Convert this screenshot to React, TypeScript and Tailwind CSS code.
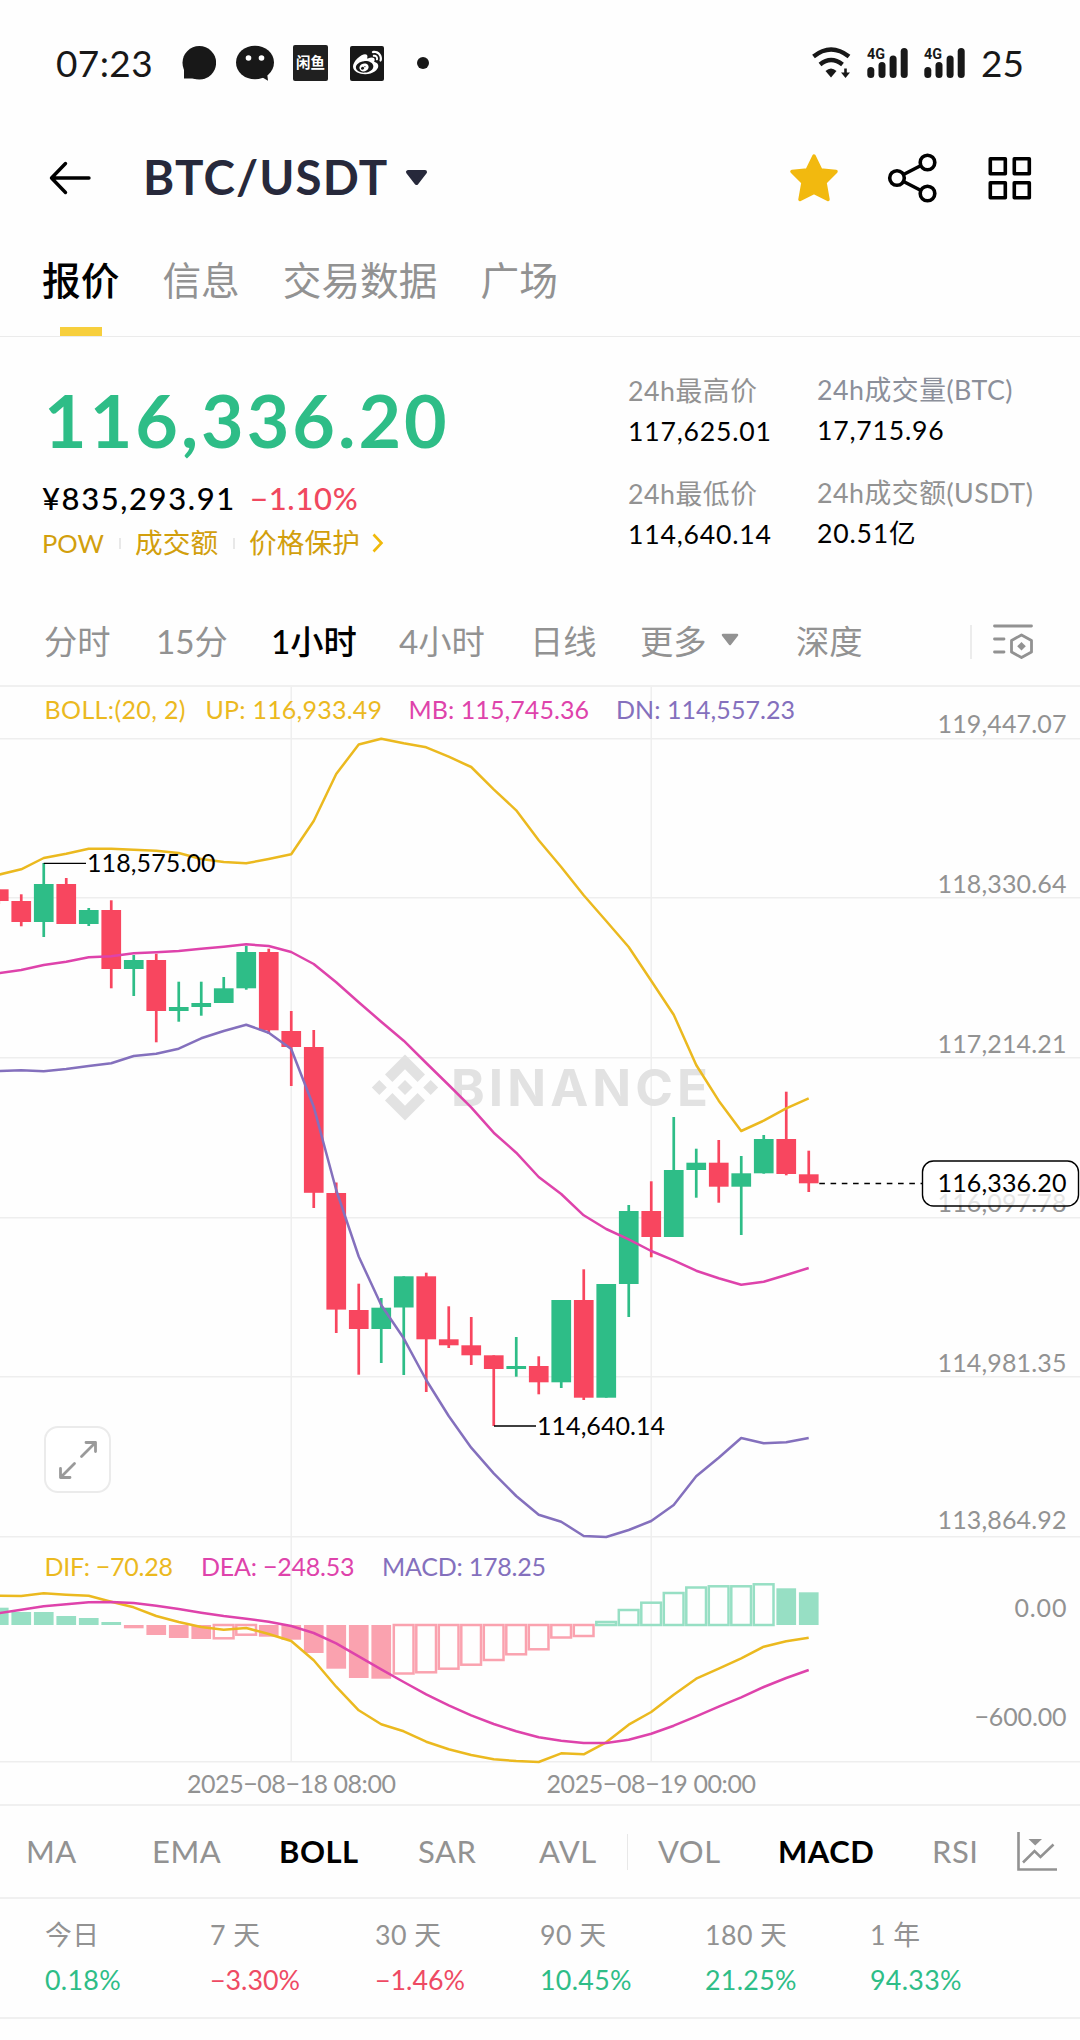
import type { ReactNode } from "react";
import { FaWeibo } from "react-icons/fa";

const GREEN = "#2ebd87";
const RED = "#f8465f";
const YELLOW = "#ebb91f";
const PINK = "#de43ab";
const PURPLE = "#8470bd";
const FONT = 'Lato, "Noto Sans CJK SC", sans-serif';

const xAt = (i: number) => -1.3 + 22.5 * i;

// [bodyTop, bodyBottom, wickTop, wickBottom, rising]
const candles: [number, number, number, number, 0 | 1][] = [
  [889.3, 901, 889.3, 904, 0],
  [901, 922, 894.3, 926.3, 0],
  [884, 922, 863, 937, 1],
  [884, 924, 878, 924, 0],
  [910, 924, 908, 926, 1],
  [910, 969, 900.3, 988.3, 0],
  [960, 969, 955, 996, 1],
  [960, 1011, 953.7, 1042.3, 0],
  [1007, 1011, 981.7, 1021.7, 1],
  [1003, 1007, 981.7, 1015.7, 1],
  [988.3, 1003, 977, 1003, 1],
  [952, 988.3, 946, 989.7, 1],
  [952, 1030.3, 948.7, 1034, 0],
  [1031, 1047, 1011, 1086, 0],
  [1047, 1192.8, 1030, 1208, 0],
  [1193, 1309.6, 1182.5, 1333, 0],
  [1310, 1329, 1283.7, 1374.7, 0],
  [1307.7, 1329, 1298, 1363, 1],
  [1276.3, 1307.5, 1276.3, 1375, 1],
  [1276.3, 1339.3, 1272.7, 1392, 0],
  [1339.3, 1345.3, 1306.3, 1348, 0],
  [1345.3, 1355.3, 1317, 1365, 0],
  [1355.3, 1369, 1355.3, 1426, 0],
  [1366, 1369, 1337, 1376.7, 1],
  [1366, 1382.3, 1356.3, 1394.3, 0],
  [1300, 1382.3, 1300, 1388, 1],
  [1300, 1397.7, 1269.3, 1400, 0],
  [1284, 1397.7, 1284, 1397.7, 1],
  [1211, 1284, 1205, 1317, 1],
  [1211, 1237, 1181.3, 1257.3, 0],
  [1170, 1237, 1117, 1237, 1],
  [1162.7, 1170, 1148.7, 1197.7, 1],
  [1162.7, 1186.7, 1140, 1202.7, 0],
  [1173.3, 1186.7, 1156, 1235, 1],
  [1139, 1173.3, 1135, 1173.7, 1],
  [1139, 1174, 1091.7, 1175.3, 0],
  [1174.3, 1183.3, 1150.7, 1192, 0],
];

const bollUp = [
  874.7, 869.3, 858, 853.7, 848.7, 848.7, 849.7, 850.7, 853, 859, 862, 863.3, 859, 854.3, 821, 774, 744.5, 738.7,
  743.3, 747.3, 756.7, 767, 789.3, 810.3, 840.3, 867, 895.3, 921, 947, 980.7, 1014.7, 1065, 1100.7, 1131, 1120.7,
  1108.3, 1098.3,
];
const bollMid = [
  973.2, 970, 965, 961.7, 957.3, 956.3, 953.3, 952.3, 951, 948.7, 946.7, 944.3, 946, 952, 964, 982.3, 1002.3, 1021.7,
  1040.7, 1063, 1085, 1107.3, 1132.7, 1152.7, 1177, 1194, 1215.3, 1229, 1239.3, 1251, 1260.3, 1270.7, 1278.3, 1284.7,
  1281.7, 1275, 1268,
];
const bollDown = [
  1071, 1070.3, 1071.3, 1069, 1066, 1063.3, 1056, 1053.7, 1048.7, 1038.3, 1031, 1024.7, 1032.7, 1049, 1106.7, 1190,
  1256.5, 1305, 1338.3, 1380, 1416, 1447.7, 1473.3, 1496, 1514.7, 1521.7, 1536, 1537, 1530, 1521, 1505, 1476.3, 1457.7,
  1438, 1443.3, 1442.3, 1438,
];
const dif = [
  1595.7, 1596, 1593.3, 1594.7, 1595.7, 1601.7, 1607.3, 1616, 1622, 1627, 1629.7, 1628, 1634, 1641, 1660.3, 1686.7,
  1710.3, 1724.3, 1731.3, 1741.7, 1749.3, 1755, 1759.3, 1761, 1762, 1753.3, 1754.3, 1742.3, 1724.7, 1712, 1694.7,
  1678.7, 1668.7, 1658.3, 1646.7, 1641.3, 1637.7,
];
const dea = [
  1613.2, 1609.7, 1606.3, 1604.3, 1602.3, 1602, 1603, 1605.7, 1609, 1612.7, 1616, 1618.7, 1621.7, 1626, 1633, 1643.3,
  1656.3, 1669.3, 1682, 1694.3, 1705.3, 1715.3, 1724, 1731.3, 1737.3, 1740.7, 1743, 1743, 1739.7, 1733.7, 1725.7,
  1716.3, 1706.7, 1697.3, 1687, 1678, 1670,
];

const ZERO = 1625;
// [edge opposite to the zero line, hollow]
const histogram: [number, 0 | 1][] = [
  [1607.7, 0], [1612, 0], [1612, 0], [1616, 0], [1618, 0], [1622, 0], [1628.3, 0], [1635, 0], [1638, 0], [1639, 0],
  [1638.3, 1], [1634.7, 1], [1636.7, 0], [1639.7, 0], [1653, 0], [1668.7, 0], [1678, 0], [1678.7, 0], [1673.5, 1],
  [1672.3, 1], [1668.7, 1], [1664.7, 1], [1660, 1], [1654.3, 1], [1649.3, 1], [1637.5, 1], [1636, 1], [1622, 1],
  [1610, 1], [1602.7, 1], [1593, 1], [1587.5, 1], [1586.3, 1], [1586.3, 1], [1584.3, 1], [1588.3, 0], [1592.3, 0],
];

const points = (ys: number[]) => ys.map((y, i) => `${xAt(i)},${y}`).join(" ");

function Label({
  x,
  end,
  y,
  fill,
  size = 25,
  children,
}: {
  x: number;
  end: number;
  y: number;
  fill: string;
  size?: number;
  children: string;
}) {
  return (
    <text x={x} y={y} fill={fill} fontSize={size} textLength={end - x} fontFamily={FONT}>
      {children}
    </text>
  );
}

function Chart() {
  return (
    <svg className="block" width="1080" height="1117" viewBox="0 687 1080 1117">
      <g fill="#eeeeee">
        {[738.5, 898.3, 1058, 1217.5, 1377.3, 1537, 1761.7].map((y) => (
          <rect key={y} x="0" y={Math.round(y) - 1} width="1080" height="1.5" />
        ))}
        <rect x="290.5" y="687" width="1.4" height="1075" />
        <rect x="650.5" y="687" width="1.4" height="1075" />
      </g>

      <g fill="#e2e2e2">
        <path d="M405 1054.5 L425 1074.5 L417.6 1081.9 L405 1069.3 L392.4 1081.9 L385 1074.5 Z" />
        <path d="M405 1120.5 L425 1100.5 L417.6 1093.1 L405 1105.7 L392.4 1093.1 L385 1100.5 Z" />
        <path d="M405 1080 L412.5 1087.5 L405 1095 L397.5 1087.5 Z" />
        <path d="M379.3 1080 L386.8 1087.5 L379.3 1095 L371.8 1087.5 Z" />
        <path d="M430.7 1080 L438.2 1087.5 L430.7 1095 L423.2 1087.5 Z" />
        <text x="451" y="1106" fontSize="51" fontWeight="700" textLength="257" fontFamily="Inter, sans-serif">
          BINANCE
        </text>
      </g>

      {candles.map(([top, bottom, high, low, up], i) => (
        <g key={i} fill={up ? GREEN : RED}>
          <rect x={xAt(i) - 1.3} y={high} width="2.7" height={low - high} />
          <rect x={xAt(i) - 9.8} y={top} width="19.7" height={bottom - top} />
        </g>
      ))}
      <g fill="none" strokeWidth="2.5" strokeLinejoin="round">
        <polyline points={points(bollUp)} stroke={YELLOW} />
        <polyline points={points(bollMid)} stroke={PINK} />
        <polyline points={points(bollDown)} stroke={PURPLE} />
      </g>

      <path d="M43.7 863.3 H86 M494 1426 H536" stroke="#000" strokeWidth="1.3" />
      <Label x={87} end={215.5} y={871.7} fill="#000">118,575.00</Label>
      <Label x={537} end={665} y={1435} fill="#000">114,640.14</Label>

      <Label x={44.5} end={185.5} y={719} fill={YELLOW}>BOLL:(20, 2)</Label>
      <Label x={205.5} end={382} y={719} fill={YELLOW}>UP: 116,933.49</Label>
      <Label x={408.5} end={589} y={719} fill={PINK}>MB: 115,745.36</Label>
      <Label x={616} end={795} y={719} fill={PURPLE}>DN: 114,557.23</Label>

      <Label x={937.5} end={1066.5} y={733} fill="#929292">119,447.07</Label>
      <Label x={937.5} end={1066.5} y={893} fill="#929292">118,330.64</Label>
      <Label x={937.5} end={1066.5} y={1052.5} fill="#929292">117,214.21</Label>
      <Label x={937.5} end={1066.5} y={1212} fill="#929292">116,097.78</Label>
      <Label x={937.5} end={1066.5} y={1372} fill="#929292">114,981.35</Label>
      <Label x={937.5} end={1066.5} y={1529} fill="#929292">113,864.92</Label>

      <path d="M819.3 1183.4 H922" stroke="#000" strokeWidth="1.5" strokeDasharray="5.6 5.65" />
      <rect x="922.5" y="1161" width="156" height="45" rx="11" fill="#fff" fillOpacity="0.75" stroke="#000" strokeWidth="1.4" />
      <Label x={937.5} end={1066.5} y={1192.3} fill="#000">116,336.20</Label>

      {histogram.map(([edge, hollow], i) => {
        const up = edge < ZERO;
        const color = up ? "#97dfc4" : "#faa2af";
        const box = {
          x: xAt(i) - 9.8,
          y: Math.min(edge, ZERO),
          width: 19.7,
          height: Math.abs(edge - ZERO),
        };
        return hollow ? (
          <rect key={i} {...box} x={xAt(i) - 9.9} fill="none" stroke={color} strokeWidth="2.5" />
        ) : (
          <rect key={i} {...box} fill={color} />
        );
      })}
      <g fill="none" strokeWidth="2.5" strokeLinejoin="round">
        <polyline points={points(dif)} stroke={YELLOW} />
        <polyline points={points(dea)} stroke={PINK} />
      </g>
      <Label x={44.5} end={173} y={1576} fill={YELLOW}>DIF: −70.28</Label>
      <Label x={201} end={354.5} y={1576} fill={PINK}>DEA: −248.53</Label>
      <Label x={382} end={546} y={1576} fill={PURPLE}>MACD: 178.25</Label>
      <Label x={1014.5} end={1066.5} y={1617} fill="#929292">0.00</Label>
      <Label x={974.5} end={1066.5} y={1726} fill="#929292">−600.00</Label>
      <Label x={187} end={396} y={1793} fill="#929292">2025−08−18 08:00</Label>
      <Label x={546.5} end={756} y={1793} fill="#929292">2025−08−19 00:00</Label>
    </svg>
  );
}

function Signal() {
  return (
    <svg className="block overflow-visible" width="42" height="32" viewBox="0 0 42 32" fill="#181818">
      <text x="0" y="12" fontSize="15" fontWeight="700" textLength="18" lengthAdjust="spacingAndGlyphs" fontFamily="Roboto, sans-serif">
        4G
      </text>
      <rect x="0.3" y="20" width="7" height="11" rx="3.5" />
      <rect x="11.5" y="15" width="7" height="16" rx="3.5" />
      <rect x="22.6" y="8.5" width="7" height="22.5" rx="3.5" />
      <rect x="33.7" y="1" width="7" height="30" rx="3.5" />
    </svg>
  );
}

function StatusBar() {
  return (
    <div className="flex h-[126px] items-center pl-[56px] text-[37px] leading-none text-[#181818]">
      <span className="w-[126px] pb-[2px] tracking-[0.4px]">07:23</span>
      <svg className="mr-[20px] block" width="34" height="36" viewBox="0 0 34 36" fill="#181818">
        <circle cx="17.3" cy="17.8" r="16.8" />
        <path d="M2 22 V33.5 H14 Z" />
      </svg>
      <svg className="mr-[19px] block" width="38" height="36" viewBox="0 0 38 36">
        <ellipse cx="19" cy="17.5" rx="19" ry="16.8" fill="#181818" />
        <path d="M24 31 L32 35.8 L31 27 Z" fill="#181818" />
        <circle cx="12.5" cy="13" r="2.8" fill="#fff" />
        <circle cx="25.5" cy="13" r="2.8" fill="#fff" />
      </svg>
      <div className="mr-[22px] flex h-[36px] w-[35px] items-center justify-center rounded-[2px] bg-[#202020] text-[14.5px] font-bold text-white">
        闲鱼
      </div>
      <div className="mr-[33px] flex h-[35px] w-[34px] items-center justify-center rounded-[2px] bg-[#181818] text-white">
        <FaWeibo size={29} />
      </div>
      <div className="size-[12px] rounded-full bg-[#181818]" />
      <svg className="mr-[15px] ml-auto block" width="40" height="32" viewBox="0 0 40 32" fill="none" stroke="#181818">
        <path d="M1.5 9.5 Q19 -4.5 37 9.5" strokeWidth="4.4" />
        <path d="M8 17.5 Q19 8.5 30.5 17.5" strokeWidth="4.4" />
        <path d="M13.5 24 Q19 19 24.5 24 L19 30.5 Z" fill="#181818" stroke="none" />
        <path d="M33.5 21.5 V29" strokeWidth="2.6" />
        <path d="M29 25.5 H38 L33.5 31 Z" fill="#181818" stroke="none" />
      </svg>
      <Signal />
      <div className="w-[15px]" />
      <Signal />
      <span className="mr-[56px] ml-[15px] pb-[2px]">25</span>
    </div>
  );
}

function TitleBar() {
  return (
    <div className="flex h-[104px] items-center pr-[48px] pl-[49px]">
      <svg className="block" width="42" height="34" viewBox="0 0 42 34" fill="none" stroke="#000" strokeWidth="3.4" strokeLinecap="round" strokeLinejoin="round">
        <path d="M40 17 H2.5 M16.5 2.5 L2.5 17 L16.5 31.5" />
      </svg>
      <h1 className="ml-[52px] w-[244px] pb-[2px] text-[47.5px] leading-none font-bold tracking-[1.1px] whitespace-nowrap text-[#27293b]">BTC/USDT</h1>
      <svg className="ml-[18px] block" width="24" height="18" viewBox="0 0 24 18">
        <path d="M3 3 H20 L11.5 14 Z" fill="#27293b" stroke="#27293b" strokeWidth="4" strokeLinejoin="round" />
      </svg>
      <svg className="ml-auto block" width="50" height="50" viewBox="0 0 50 50">
        <path
          d="M25 3 L31.8 17 L47 18.4 L36 29.6 L39 46.5 L25 39.5 L11 46.5 L14 29.6 L3 18.4 L18.2 17 Z"
          fill="#f2b90f"
          stroke="#f2b90f"
          strokeWidth="3.5"
          strokeLinejoin="round"
        />
      </svg>
      <svg className="ml-[48px] block" width="50" height="50" viewBox="0 0 50 50" fill="none" stroke="#000" strokeWidth="3.6">
        <circle cx="10" cy="25" r="7.3" />
        <circle cx="40.5" cy="9.5" r="7.3" />
        <circle cx="40.5" cy="40.5" r="7.3" />
        <path d="M16.5 21.5 L34 12.5 M16.5 28.5 L34 37.5" />
      </svg>
      <svg className="ml-[51px] block" width="44" height="44" viewBox="0 0 44 44" fill="none" stroke="#000" strokeWidth="3.6" strokeLinejoin="round">
        <rect x="2.3" y="2.8" width="15" height="15" />
        <rect x="26.3" y="2.8" width="15" height="15" />
        <rect x="2.3" y="26.8" width="15" height="15" />
        <rect x="26.3" y="26.8" width="15" height="15" />
      </svg>
    </div>
  );
}

function PageTabs() {
  return (
    <nav className="flex h-[107px] gap-[43px] border-b border-[#ebebeb] pl-[42px] text-[38.7px] leading-none text-[#929292]">
      <div className="flex flex-col items-center justify-between pt-[31px] font-medium text-black">
        报价
        <div className="h-[9px] w-[42px] bg-[#f7cf3d]" />
      </div>
      <div className="pt-[31px]">信息</div>
      <div className="pt-[31px]">交易数据</div>
      <div className="pt-[31px]">广场</div>
    </nav>
  );
}

function Stat({ label, value, cool = false }: { label: string; value: string; cool?: boolean }) {
  return (
    <div className="h-[103px] text-[26.6px] leading-[30px] whitespace-nowrap">
      <div className={`text-[26.8px] tracking-[0.5px] ${cool ? "text-[#8b8f9a]" : "text-[#929292]"}`}>{label}</div>
      <div className="mt-[10px] tracking-[0.8px] text-black">{value}</div>
    </div>
  );
}

function Summary() {
  return (
    <section className="flex h-[257px]">
      <div className="w-[628px] pl-[42px]">
        <div className="mt-[46px] ml-[2px] text-[73.5px] leading-[73px] font-bold tracking-[3px] text-[#2ebd87]">116,336.20</div>
        <div className="mt-[24px] flex text-[31px] leading-[36px]">
          <span className="w-[208px] font-medium tracking-[1.6px] text-black">¥835,293.91</span>
          <span className="font-medium tracking-[0.7px] text-[#f0485f]">−1.10%</span>
        </div>
        <div className="mt-[12px] flex items-center text-[27.7px] leading-[30px] text-[#d29f0d]">
          <span className="w-[77px] text-[25.5px]">POW</span>
          <span className="mr-[14px] h-[11px] w-[2px] bg-[#e8e8e8]" />
          <span>成交额</span>
          <span className="mr-[14px] ml-[15px] h-[11px] w-[2px] bg-[#e8e8e8]" />
          <span>价格保护</span>
          <svg className="ml-[12px] block" width="12" height="20" viewBox="0 0 12 20" fill="none" stroke="#f0b90b" strokeWidth="2.6">
            <path d="M1.5 1.5 L9.5 10 L1.5 18.5" />
          </svg>
        </div>
      </div>
      <div className="w-[189px] pt-[39px]">
        <Stat label="24h最高价" value="117,625.01" />
        <Stat label="24h最低价" value="114,640.14" />
      </div>
      <div className="pt-[38px]">
        <Stat label="24h成交量(BTC)" value="17,715.96" cool />
        <Stat label="24h成交额(USDT)" value="20.51亿" />
      </div>
    </section>
  );
}

function Intervals() {
  return (
    <div className="flex h-[93px] items-center border-b-2 border-[#f0f0f0] pt-[5px] pl-[44px] text-[33.3px] leading-none text-[#929292]">
      <span className="w-[112px]">分时</span>
      <span className="w-[115px]">15分</span>
      <span className="w-[128px] font-medium text-black">1小时</span>
      <span className="w-[131px]">4小时</span>
      <span className="w-[110px]">日线</span>
      <span className="flex w-[156px] items-center">
        更多
        <svg className="mb-[3px] ml-[14px] block" width="18" height="14" viewBox="0 0 18 14">
          <path d="M2 2 H16 L9 11 Z" fill="#929292" stroke="#929292" strokeWidth="2.5" strokeLinejoin="round" />
        </svg>
      </span>
      <span className="w-[174px]">深度</span>
      <span className="h-[34px] w-[2px] bg-[#ececec]" />
      <svg className="ml-[21px] block" width="42" height="36" viewBox="0 0 42 36" fill="none" stroke="#929292" strokeWidth="2.8" strokeLinecap="round">
        <path d="M1.5 2 H38.5 M1.5 15 H11 M1.5 28 H11" />
        <path d="M28.5 11 L38.5 16.5 V28 L28.5 33.5 L18.5 28 V16.5 Z" strokeLinejoin="round" />
        <path d="M28.5 18 L32.8 22.3 L28.5 26.6 L24.2 22.3 Z" fill="#929292" stroke="none" />
      </svg>
    </div>
  );
}

function Indicator({ w, active = false, children }: { w: string; active?: boolean; children: ReactNode }) {
  return <span className={`${w} ${active ? "font-bold text-black" : ""}`}>{children}</span>;
}

function Indicators() {
  return (
    <div className="flex h-[95px] items-center border-y-2 border-[#f0f0f0] pl-[26px] text-[31px] leading-none tracking-[0.5px] text-[#929292]">
      <Indicator w="w-[126px]">MA</Indicator>
      <Indicator w="w-[127px]">EMA</Indicator>
      <Indicator w="w-[139px]" active>BOLL</Indicator>
      <Indicator w="w-[121px]">SAR</Indicator>
      <Indicator w="w-[88px]">AVL</Indicator>
      <span className="mr-[30px] h-[36px] w-[1px] bg-[#e8e8e8]" />
      <Indicator w="w-[120px]">VOL</Indicator>
      <Indicator w="w-[154px]" active>MACD</Indicator>
      <Indicator w="w-[85px]">RSI</Indicator>
      <svg className="block" width="42" height="40" viewBox="0 0 42 40" fill="none" stroke="#929292" strokeWidth="2.6">
        <path d="M1.5 0 V37.5 H40" />
        <path d="M6 30.5 L17.5 19 L23.5 25 L36.5 12.5" />
        <path d="M11.5 7 H25 L18.2 13.5 Z" fill="#929292" stroke="none" />
      </svg>
    </div>
  );
}

const returns: [string, string][] = [
  ["今日", "0.18%"],
  ["7 天", "−3.30%"],
  ["30 天", "−1.46%"],
  ["90 天", "10.45%"],
  ["180 天", "21.25%"],
  ["1 年", "94.33%"],
];

function Returns() {
  return (
    <div className="grid h-[120px] grid-cols-[repeat(6,165px)] border-b-2 border-[#f0f0f0] pt-[21px] pl-[45px] text-[26.8px] leading-[30px]">
      {returns.map(([period, change]) => (
        <div key={period}>
          <div className="tracking-[0.4px] text-[#929292]">{period}</div>
          <div className={`mt-[15px] ${change.startsWith("−") ? "text-[#ee4a63]" : "tracking-[0.3px] text-[#2ebd87]"}`}>{change}</div>
        </div>
      ))}
    </div>
  );
}

export default function App() {
  return (
    <main className="h-[2040px] w-[1080px] overflow-hidden bg-[#fefefe] font-[Lato,'Noto_Sans_CJK_SC',sans-serif]">
      <StatusBar />
      <TitleBar />
      <PageTabs />
      <Summary />
      <Intervals />
      <div className="relative h-[1117px]">
        <Chart />
        <button className="absolute top-[739px] left-[44px] flex size-[67px] items-center justify-center rounded-[14px] border-2 border-[#ebebeb] bg-white/80">
          <svg width="40" height="40" viewBox="0 0 40 40" fill="none" stroke="#9a9a9a" strokeWidth="2.8" strokeLinecap="round" strokeLinejoin="round">
            <path d="M23.5 16.5 L37.5 2.5 M28 2.5 H37.5 V11.5 M16.5 23.5 L2.5 37.5 M2.5 28.5 V37.5 H12" />
          </svg>
        </button>
      </div>
      <Indicators />
      <Returns />
    </main>
  );
}
